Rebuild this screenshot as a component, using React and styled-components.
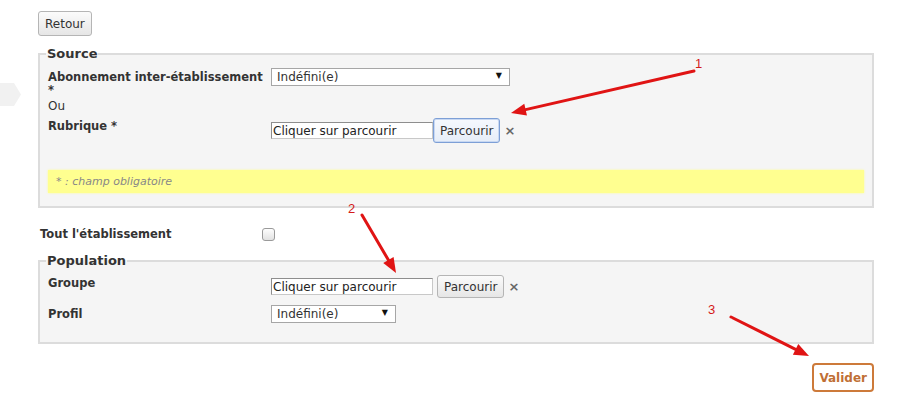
import styled, { createGlobalStyle } from "styled-components";

const GlobalStyle = createGlobalStyle`
  html, body {
    margin: 0;
    padding: 0;
    background: #fff;
  }
  body {
    font-family: "DejaVu Sans", Verdana, sans-serif;
    font-size: 12px;
    color: #333;
  }
`;

const Page = styled.div`
  position: relative;
  width: 910px;
  height: 405px;
  overflow: hidden;
  box-sizing: border-box;
  padding: 11px 36px 0 38px;
`;

const SideTab = styled.svg`
  position: absolute;
  left: 0;
  top: 83px;
`;

const Button = styled.button`
  font-family: "DejaVu Sans", Verdana, sans-serif;
  font-size: 12px;
  color: #333;
  height: ${(p) => p.$h || 23}px;
  padding: 0 ${(p) => (p.$pad || 5)}px;
  border: 1px solid ${(p) => (p.$focus ? "#7d9fd6" : "#b5b5b5")};
  border-radius: 3px;
  background: ${(p) =>
    p.$focus
      ? "linear-gradient(#f6f9fe, #e6edf8)"
      : "linear-gradient(#fbfbfb, #e6e6e6)"};
  box-shadow: ${(p) => (p.$focus ? "inset 0 0 0 1px #c8d8f2" : "none")};
  cursor: pointer;
`;

const Fieldset = styled.fieldset`
  margin: ${(p) => p.$top || 0}px 0 0 0;
  padding: 3px 8px ${(p) => p.$bottom || 12}px 8px;
  border: 2px solid #dcdcdc;
  background: #f5f5f5;
  min-width: 0;
`;

const Legend = styled.legend`
  padding: 0 1px;
  margin-left: -2px;
  font-weight: bold;
  font-size: 13px;
  color: #333;
`;

const Row = styled.div`
  display: grid;
  grid-template-columns: 223px 1fr;
  align-items: start;
  margin-top: ${(p) => p.$top || 0}px;
`;

const Label = styled.label`
  font-weight: bold;
  font-size: 11.5px;
  color: #333;
  line-height: 13px;
  padding-right: 8px;
  padding-top: ${(p) => (p.$pt === undefined ? 3 : p.$pt)}px;
`;

const Plain = styled.div`
  font-size: 12px;
  color: #333;
  margin-top: ${(p) => p.$top || 0}px;
`;

const Controls = styled.div`
  display: flex;
  align-items: center;
  gap: ${(p) => p.$gap || 0}px;
`;

const SelectWrap = styled.div`
  position: relative;
  width: ${(p) => p.$w}px;
  height: 18px;
`;

const Select = styled.select`
  appearance: none;
  -webkit-appearance: none;
  box-sizing: border-box;
  width: 100%;
  height: 18px;
  margin: 0;
  padding: 0 0 0 5px;
  border: 1px solid #a6a6a6;
  border-radius: 0;
  background: #fff;
  font-family: "DejaVu Sans", Verdana, sans-serif;
  font-size: 12px;
  color: #333;
`;

const Caret = styled.span`
  position: absolute;
  right: 8px;
  top: 3px;
  font-size: 8px;
  color: #111;
  pointer-events: none;
`;

const TextInput = styled.input`
  box-sizing: border-box;
  width: 162px;
  height: 17px;
  margin: 0;
  padding: 0 1px;
  border: 1px solid #8e8e8e;
  border-right-color: #c8c8c8;
  border-bottom-color: #c8c8c8;
  font-family: "DejaVu Sans", Verdana, sans-serif;
  font-size: 12px;
  color: #222;
  background: #fff;
`;

const Clear = styled.span`
  font-weight: bold;
  font-size: 13px;
  color: #666;
  margin-left: ${(p) => p.$ml || 0}px;
`;

const Note = styled.div`
  margin-top: 27px;
  height: 23px;
  display: flex;
  align-items: center;
  padding-left: 8px;
  background: #ffff90;
  box-shadow: 0 0 2px #ffff90;
  font-size: 11px;
  font-style: italic;
  color: #888;
`;

const CheckRow = styled.div`
  display: grid;
  grid-template-columns: 222px 1fr;
  align-items: center;
  margin: 20px 0 0 2px;
`;

const Check = styled.input`
  appearance: none;
  -webkit-appearance: none;
  margin: 0;
  width: 13px;
  height: 13px;
  border: 1px solid #9a9a9a;
  border-radius: 3px;
  background: linear-gradient(#fdfdfd, #e2e2e2);
`;

const Footer = styled.div`
  display: flex;
  justify-content: flex-end;
  margin-top: 19px;
`;

const Submit = styled.button`
  height: 29px;
  padding: 0 5px;
  border: 2px solid #cd7a3a;
  border-radius: 4px;
  background: #fff;
  font-family: "DejaVu Sans", Verdana, sans-serif;
  font-weight: bold;
  font-size: 12px;
  color: #bf6f35;
  cursor: pointer;
`;

const Annotations = styled.svg`
  position: absolute;
  left: 0;
  top: 0;
  pointer-events: none;
`;

function Arrow({ x1, y1, x2, y2, n, nx, ny }) {
  const a = Math.atan2(y2 - y1, x2 - x1);
  const len = 15;
  const w = 6;
  const bx = x2 - len * Math.cos(a);
  const by = y2 - len * Math.sin(a);
  const px = -Math.sin(a) * w;
  const py = Math.cos(a) * w;
  return (
    <g>
      <line x1={x1} y1={y1} x2={bx} y2={by} stroke="#e01414" strokeWidth="3" strokeLinecap="round" />
      <polygon
        points={`${x2},${y2} ${bx + px},${by + py} ${bx - px},${by - py}`}
        fill="#e01414"
      />
      <text x={nx} y={ny} fill="#d41a1a" fontSize="13" fontFamily="'Liberation Sans', sans-serif">
        {n}
      </text>
    </g>
  );
}

export default function App() {
  return (
    <>
      <GlobalStyle />
      <Page>
        <SideTab width="21" height="23" viewBox="0 0 21 23">
          <polygon points="0,0 14,0 21,11.5 14,23 0,23" fill="#f1f1f1" />
        </SideTab>

        <Button $pad={6} $h={25}>Retour</Button>

        <Fieldset $top={10} $bottom={13}>
          <Legend>Source</Legend>
          <Row $top={4}>
            <Label>Abonnement inter-établissement *</Label>
            <SelectWrap $w={239}>
              <Select defaultValue="x">
                <option value="x">Indéfini(e)</option>
              </Select>
              <Caret>▼</Caret>
            </SelectWrap>
          </Row>
          <Plain $top={2}>Ou</Plain>
          <Row $top={5}>
            <Label $pt={2}>Rubrique *</Label>
            <Controls>
              <TextInput defaultValue="Cliquer sur parcourir" />
              <Button $focus $pad={6} $h={25}>Parcourir</Button>
              <Clear $ml={4}>×</Clear>
            </Controls>
          </Row>
          <Note>* : champ obligatoire</Note>
        </Fieldset>

        <CheckRow>
          <Label $pt={0}>Tout l'établissement</Label>
          <Check type="checkbox" />
        </CheckRow>

        <Fieldset $top={12} $bottom={19}>
          <Legend>Population</Legend>
          <Row $top={4}>
            <Label $pt={2}>Groupe</Label>
            <Controls $gap={4}>
              <TextInput defaultValue="Cliquer sur parcourir" />
              <Button $pad={6}>Parcourir</Button>
              <Clear>×</Clear>
            </Controls>
          </Row>
          <Row $top={7}>
            <Label>Profil</Label>
            <SelectWrap $w={125}>
              <Select defaultValue="x">
                <option value="x">Indéfini(e)</option>
              </Select>
              <Caret>▼</Caret>
            </SelectWrap>
          </Row>
        </Fieldset>

        <Footer>
          <Submit>Valider</Submit>
        </Footer>

        <Annotations width="910" height="405" viewBox="0 0 910 405">
          <Arrow x1={694} y1={71} x2={511} y2={113} n="1" nx={695} ny={68} />
          <Arrow x1={362} y1={215} x2={396} y2={273} n="2" nx={348} ny={213} />
          <Arrow x1={731} y1={317} x2={809} y2={356} n="3" nx={708} ny={314} />
        </Annotations>
      </Page>
    </>
  );
}
